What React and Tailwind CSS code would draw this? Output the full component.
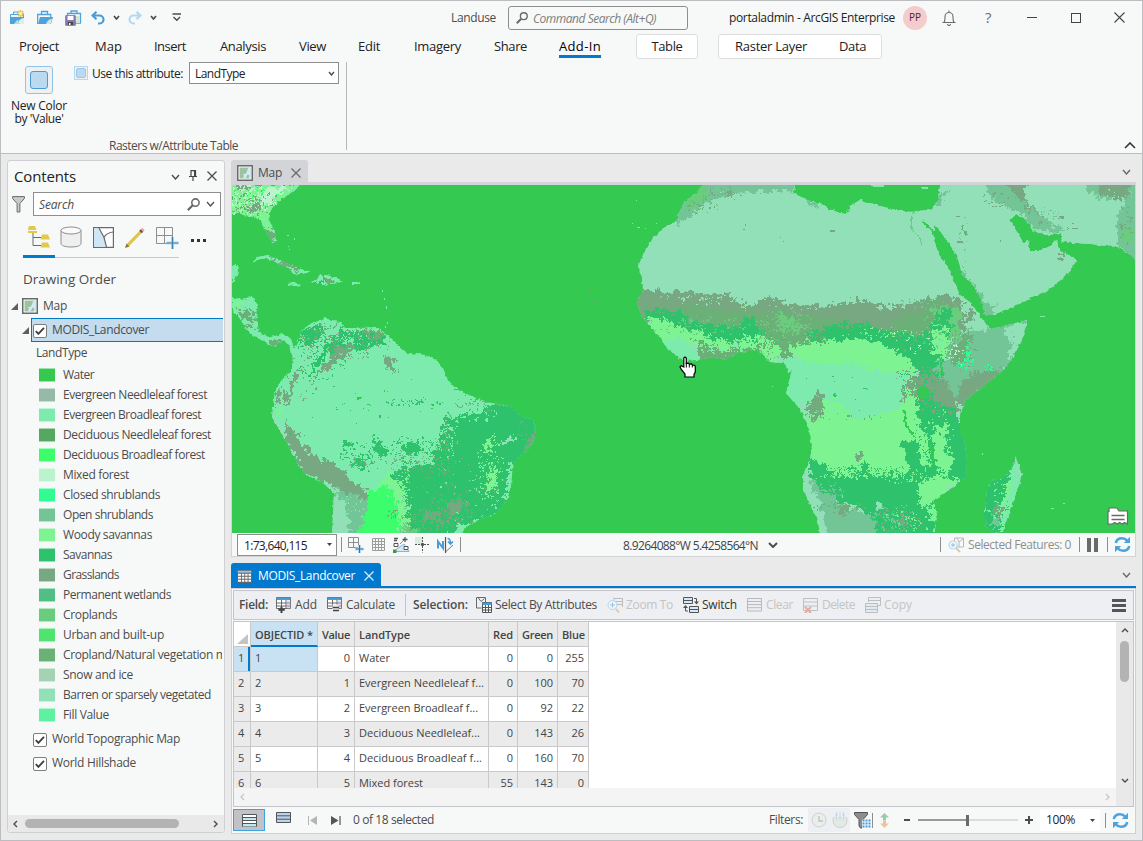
import React, { useLayoutEffect, useRef, useState } from "react";

/* Text run tracked so that it spans exactly w pixels. */
function T({ w, className = "", children }) {
  const ref = useRef(null);
  const [s, setS] = useState(0);
  useLayoutEffect(() => {
    const el = ref.current;
    el.style.letterSpacing = "0px";
    const n = el.getBoundingClientRect().width;
    const v = (w - n) / el.textContent.length;
    el.style.letterSpacing = v + "px";
    setS(v);
  }, [w]);
  return (
    <span className={"block shrink-0 whitespace-nowrap " + className} style={{ width: w }}>
      <span ref={ref} className="inline-block" style={{ letterSpacing: s }}>{children}</span>
    </span>
  );
}

function I({ w = 16, h = 16, className = "", children }) {
  return (
    <svg width={w} height={h} viewBox={`0 0 ${w} ${h}`} fill="none" className={"block shrink-0 " + className}>
      {children}
    </svg>
  );
}

const Chevron = ({ w = 9, c = "#4c4c4c", sw = 1.4, className = "", dir = "down" }) => {
  const h = Math.ceil(w / 2) + 1;
  if (dir === "left") return <I w={h} h={w} className={className}><path d={`M${h - 1} 1L1 ${w / 2}L${h - 1} ${w - 1}`} stroke={c} strokeWidth={sw} /></I>;
  if (dir === "right") return <I w={h} h={w} className={className}><path d={`M1 1L${h - 1} ${w / 2}L1 ${w - 1}`} stroke={c} strokeWidth={sw} /></I>;
  if (dir === "up") return <I w={w} h={h} className={className}><path d={`M1 ${h - 1}L${w / 2} 1L${w - 1} ${h - 1}`} stroke={c} strokeWidth={sw} /></I>;
  return <I w={w} h={h} className={className}><path d={`M1 1L${w / 2} ${h - 1}L${w - 1} 1`} stroke={c} strokeWidth={sw} /></I>;
};

const Cross = ({ w = 11, c = "#4c4c4c", sw = 1.3, className = "" }) => (
  <I w={w} h={w} className={className}><path d={`M.5 .5L${w - 0.5} ${w - 0.5}M${w - 0.5} .5L.5 ${w - 0.5}`} stroke={c} strokeWidth={sw} /></I>
);

const Magnifier = ({ w = 12, c = "#6a6a6a", className = "" }) => (
  <svg width={w} height={w} viewBox="0 0 12 12" fill="none" className={"block shrink-0 " + className}>
    <circle cx="7.8" cy="4.2" r="3.4" stroke={c} strokeWidth="1.4" />
    <path d="M5.3 6.7L.8 11.2" stroke={c} strokeWidth="2" />
  </svg>
);

const VLine = ({ className = "" }) => <div className={"h-[15px] w-px shrink-0 bg-[#8e8e8e] " + className} />;

const Refresh = ({ className = "" }) => (
  <I w={17} h={17} className={className}>
    <path d="M1.8 7C2.4 4 5 2.2 8 2.2c2.4 0 4 .9 5.300 2.500M15.200 10C14.600 13 12 14.800 9 14.800c-2.400 0-4-.9-5.300-2.500" stroke="#4fa3dc" strokeWidth="2.600" />
    <path d="M16 .8v6.200H9.800zM1 16.200V10h6.200z" fill="#4fa3dc" />
  </I>
);

const MapIcon = ({ className = "" }) => (
  <I className={className}>
    <path d="M.75 .75h14.500v14.500H.75z" fill="#fff" stroke="#6a6a6a" strokeWidth="1.500" />
    <path d="M2.500 2.500h11v11h-11z" fill="#9cc3a0" />
    <path d="M11.500 2.500h2v11h-2l1-3-2-1-2 4H6l1-3-1.500-1 3.500-1z" fill="#d3e9f7" />
  </I>
);

const Check = ({ className = "" }) => (
  <div className={"flex h-[14px] w-[14px] shrink-0 items-center justify-center rounded-[2px] border border-[#7d7d7d] bg-white " + className}>
    <I w={10} h={8}><path d="M.8 4.200L3.400 6.800L9 .9" stroke="#3f3f3f" strokeWidth="1.900" /></I>
  </div>
);

const Tri = ({ className = "" }) => <I w={7} h={7} className={className}><path d="M7 0v7H0z" fill="#5f5f5f" /></I>;

const TitleBar = () => (
  <div className="flex h-[33px] items-center pl-2">
    <I>
      <path d="M4.500 4V2h5M1.500 14V4.500h13V14" stroke="#4fa3dc" />
      <path d="M1 7h14v7H1z" fill="#4fa3dc" /><path d="M2 5h12v2H2z" fill="#eef6fb" /><path d="M9 14c0-3 2-5.500 6-6v6z" fill="#dff0e0" /><path d="M5 14l3.500-4.500L11 14z" fill="#b5daf2" />
      <path d="M11.500 0v7M8 3.500h7M9 1l5 5M14 1l-5 5" stroke="#e0c04a" strokeWidth="1.400" /><circle cx="11.500" cy="3.500" r="1.800" fill="#fff1a0" />
    </I>
    <I className="ml-3">
      <path d="M4.500 4V1.500h6V4M.7 14V4.500h13V7" stroke="#4fa3dc" strokeWidth="1.300" />
      <path d="M3 7h13l-2 7H1z" fill="#4fa3dc" /><path d="M9 14c1-3 3-5 6-5l-1.500 5z" fill="#d5ead6" />
    </I>
    <I w={17} h={16} className="ml-3">
      <path d="M6 3V1h6v2M2.500 6V3.500h13V13H10" stroke="#4fa3dc" strokeWidth="1.300" /><path d="M11 6h4v7h-4z" fill="#cfe8d2" />
      <path d="M.7 5.700h9.600v9.600H.7z" fill="#8d75b5" stroke="#8d75b5" /><path d="M2.500 6h6v4h-6z" fill="#fff" /><path d="M3 12h5v3H3z" fill="#444" /><path d="M4 13h1.500v2H4z" fill="#fff" />
    </I>
    <I w={14} h={14} className="ml-[9px]"><path d="M5.500 .8L1.500 4.500L5.500 8.200M1.500 4.500H8.500a4 4 0 0 1 0 8H7" stroke="#4a9bd6" strokeWidth="2.200" /></I>
    <Chevron w={7} sw={1.700} className="ml-[8px]" />
    <I w={14} h={14} className="ml-[8px]"><path d="M8.500 .8L12.500 4.500L8.500 8.200M12.500 4.500H5.500a4 4 0 0 0 0 8H7" stroke="#b4d8ef" strokeWidth="2.200" /></I>
    <Chevron w={7} sw={1.700} className="ml-[8px]" />
    <I w={10} h={9} className="ml-[15px]"><path d="M.5 1h8.500M1.500 4l3.300 3.300L8 4" stroke="#4c4c4c" strokeWidth="1.400" /></I>
    <T w={45} className="ml-[269px] pt-px text-[12px] text-[#4c4c4c]">Landuse</T>
    <div className="ml-3 flex h-6 w-[180px] shrink-0 items-center rounded-[3px] border border-[#8e8e8e] pl-[7px]">
      <Magnifier />
      <T w={123} className="ml-[5px] pt-[2px] text-[12px] italic text-[#7d7d7d]">Command Search (Alt+Q)</T>
    </div>
    <T w={166} className="ml-[41px] pt-px text-[12px] text-[#222]">portaladmin - ArcGIS Enterprise</T>
    <div className="ml-2 flex h-6 w-6 shrink-0 items-center justify-center rounded-full bg-[#f3cccb] text-[10px] text-[#5c2127]">PP</div>
    <I w={14} h={16} className="ml-[15px]"><path d="M.5 12.500h13M2 12.300C3.200 11 3 9 3 6.500a4 4 0 0 1 8 0C11 9 10.800 11 12 12.300M7 2.500V.5M5.500 14a1.500 1.500 0 0 0 3 0" stroke="#6a6a6a" strokeWidth="1.100" /></I>
    <T w={7} className="ml-[29px] text-[15px] text-[#6e6e6e]">?</T>
    <div className="ml-[35px] h-px w-[10px] bg-[#444]" />
    <div className="ml-[34px] h-[10px] w-[10px] border border-[#444]" />
    <Cross w={11} c="#444" sw={1.100} className="ml-[33px]" />
  </div>
);

const Tabs = () => (
  <div className="flex h-[25px] items-center pl-[18px] text-[13px] leading-[25px] text-[#222]">
    <T w={40}>Project</T>
    <T w={27} className="ml-9">Map</T>
    <T w={32} className="ml-8">Insert</T>
    <T w={46} className="ml-[34px]">Analysis</T>
    <T w={27} className="ml-[33px]">View</T>
    <T w={22} className="ml-8">Edit</T>
    <T w={47} className="ml-[34px]">Imagery</T>
    <T w={33} className="ml-[33px]">Share</T>
    <div className="mb-px ml-8 flex h-6 items-center border-b-[3px] border-[#0079cf] pt-[4px]"><T w={42} className="font-medium text-black">Add-In</T></div>
    <div className="ml-[35px] flex h-[25px] w-[62px] items-center justify-center rounded-[3px] border border-[#dedede] bg-white"><T w={31}>Table</T></div>
    <div className="ml-5 flex h-[25px] w-[164px] items-center rounded-[3px] border border-[#dedede] bg-white pl-4">
      <T w={72}>Raster Layer</T><T w={27} className="ml-8">Data</T>
    </div>
  </div>
);

const Ribbon = () => (
  <div className="flex h-[95px] border-b border-[#bcbdc1] pt-[3px] text-[12px] text-[#222]">
    <div className="h-[88px] w-[346px] border-r border-[#b8b8b8]">
      <div className="flex h-[76px] items-start">
        <div className="flex w-[76px] flex-col items-center pt-1">
          <div className="flex h-7 w-7 items-center justify-center rounded-[3px] border border-[#8fc5ea] bg-[#f0f0f0]">
            <div className="h-[18px] w-[18px] rounded-[3px] border border-[#4a9bd6] bg-[#bbdaef]" />
          </div>
          <T w={56} className="mt-[5px] leading-[13px]">New Color</T>
          <T w={49} className="leading-[13px]">by 'Value'</T>
        </div>
        <div className="flex h-[22px] items-center">
          <div className="-ml-[3px] flex h-[14px] w-[14px] items-center justify-center border border-[#b4d8ef] bg-[#f0f0f0]"><div className="h-[10px] w-[10px] rounded-[2px] border border-[#9bc9e8] bg-[#bbdaef]" /></div>
          <T w={91} className="ml-1 pt-[2px]">Use this attribute:</T>
          <div className="ml-[6px] flex h-[22px] w-[150px] items-center justify-between border border-[#8e8e8e] bg-white pl-[5px] pr-[3px]">
            <T w={50} className="pt-[2px]">LandType</T><Chevron w={7} />
          </div>
        </div>
      </div>
      <T w={129} className="ml-[108px] -mt-px leading-[18px] text-[#4c4c4c]">Rasters w/Attribute Table</T>
    </div>
    <Chevron w={12} dir="up" c="#333" sw={1.600} className="ml-auto mr-[6px] mt-[80px]" />
  </div>
);

/* ---------- contents pane ---------- */
const legend = [
  ["Water", 31, "#35c94f"], ["Evergreen Needleleaf forest", 144, "#95bba8"], ["Evergreen Broadleaf forest", 138, "#7cebad"],
  ["Deciduous Needleleaf forest", 148, "#54a862"], ["Deciduous Broadleaf forest", 142, "#3cfe6c"], ["Mixed forest", 66, "#baf3cd"],
  ["Closed shrublands", 97, "#33fb93"], ["Open shrublands", 90, "#73c497"], ["Woody savannas", 89, "#7ef392"], ["Savannas", 49, "#2dc26b"],
  ["Grasslands", 56, "#77a882"], ["Permanent wetlands", 108, "#4fbf85"], ["Croplands", 54, "#6acd7e"], ["Urban and built-up", 101, "#50e46f"],
  ["Cropland/Natural vegetation mosaic", 190, "#6bb077"], ["Snow and ice", 70, "#a3d3b2"], ["Barren or sparsely vegetated", 148, "#92e0b7"], ["Fill Value", 46, "#5ff0a0"],
];

const Contents = () => (
  <div className="ml-[6px] mt-[6px] flex h-[673px] w-[218px] shrink-0 flex-col overflow-hidden rounded-[3px] border border-[#d0d0d4] bg-[#f7f9f8] text-[12px] text-[#4c4c4c]">
    <div className="flex h-[31px] items-center pl-[6px]">
      <T w={62} className="text-[15px] text-[#222]">Contents</T>
      <Chevron w={9} className="ml-[95px]" />
      <I w={8} h={11} className="ml-[9px] mb-[2px]"><path d="M2 6V.6h4.500V6M0 6.500h8M4 7v4" stroke="#444" strokeWidth="1.200" /><path d="M5 1h1.500v5H5z" fill="#444" /></I>
      <Cross w={10} className="ml-[10px] mb-px" />
    </div>
    <div className="flex h-6 items-center pl-1">
      <I w={13} h={17}><path d="M.6 .6h11.800v1.900L7.900 7.500V16H5.100V7.500L.6 2.500z" fill="#c9c9c9" stroke="#6a6a6a" /></I>
      <div className="ml-2 flex h-6 w-[188px] items-center border border-[#8e8e8e] bg-white pl-[5px]">
        <T w={35} className="pt-px italic">Search</T>
        <Magnifier w={13} className="ml-[113px]" />
        <Chevron w={9} sw={1.200} className="ml-[6px]" />
      </div>
    </div>
    <div className="relative ml-[15px] mt-[7px] flex h-[35px] w-[156px] items-center border-b border-[#c8c8c8] pb-[6px]">
      <div className="absolute -bottom-[1px] left-0 h-[3px] w-8 bg-[#0079cf]" />
      <I w={22} h={22} className="ml-[5px]"><path d="M5 6v13.500h8M5 11.500h8" stroke="#6a6a6a" /><path d="M1 0h6l1.500 4h-9zM0 5h9v2H0zM14 8.500h6l2 5h-9.500zM14 16.500h6l2 5h-9.500z" fill="#e2c94a" /></I>
      <I w={22} h={22} className="ml-[10px]"><path d="M1 4.500v13c0 2 4 3.500 10 3.500s10-1.500 10-3.500v-13" fill="#efefef" stroke="#8e8e8e" /><ellipse cx="11" cy="4.500" rx="10" ry="3.500" fill="#fafafa" stroke="#8e8e8e" /></I>
      <I w={21} h={21} className="ml-[11px]"><path d="M.6 .6h19.800v19.800H.6z" fill="#fff" stroke="#6a6a6a" strokeWidth="1.200" /><path d="M1.200 1.200H6l5 10 2 8.600H1.200z" fill="#cfe6f7" /><path d="M6 1l5 9.500 2.500 9.500M11 10.500c2-4 5-5 9-5.500" stroke="#6a6a6a" strokeWidth="1.200" /></I>
      <I w={20} h={21} className="ml-[11px]"><path d="M3 18L16 4.500" stroke="#dcc44a" strokeWidth="3.200" /><path d="M0 21l1.500-4.500L4.600 19.500z" fill="#8a7440" /><path d="M15.500 5l1.500-1.500" stroke="#555" strokeWidth="3.600" /><path d="M17 3.500l1.500-1.500" stroke="#f2a0a0" strokeWidth="3.600" /></I>
      <I w={23} h={23} className="ml-[11px]"><path d="M.5 1.500h16v16H.5zM8.500 1.500v16M.5 9.500h16" stroke="#8e8e8e" /><path d="M16.500 11v12M10.500 17h12" stroke="#b4d8ef" strokeWidth="3" /><path d="M16.500 11v12M10.500 17h12" stroke="#3f7fae" strokeWidth="1.200" /></I>
      <I w={16} h={3} className="ml-[12px] mt-[7px]"><path d="M0 0h3v3H0zM6 0h3v3H6zM12 0h3v3h-3z" fill="#333" /></I>
    </div>
    <T w={93} className="ml-[15px] mt-[11px] text-[13.500px] font-medium leading-[20px]">Drawing Order</T>
    <div className="mt-[5px] flex h-6 items-center pl-[3px]"><Tri /><MapIcon className="ml-[4px]" /><T w={24} className="ml-[5px]">Map</T></div>
    <div className="flex h-6 items-center pl-[14px]">
      <Tri />
      <div className="ml-[2px] flex h-6 w-[192px] items-center border-y border-l border-[#0079c1] bg-[#c5dbee] pl-px">
        <Check className="mt-px" /><T w={97} className="ml-[5px]">MODIS_Landcover</T>
      </div>
    </div>
    <T w={51} className="ml-[28px] leading-[22px]">LandType</T>
    <div className="mt-px w-[214px] overflow-hidden">
      {legend.map(([n, w, c]) => (
        <div key={n} className="flex h-5 items-center pl-[31px]">
          <span className="mb-px h-[14px] w-4 shrink-0 border-y border-white/50" style={{ backgroundColor: c }} />
          <T w={w} className="ml-2">{n}</T>
        </div>
      ))}
    </div>
    <div className="mt-[2px] flex h-6 items-center pl-[25px]"><Check className="mt-px" /><T w={128} className="ml-[5px]">World Topographic Map</T></div>
    <div className="flex h-6 items-center pl-[25px]"><Check className="mt-px" /><T w={84} className="ml-[5px]">World Hillshade</T></div>
    <div className="mt-auto flex h-[17px] items-center bg-[#e9e9e9] pl-[5px]">
      <Chevron w={8} dir="left" /><div className="ml-[7px] h-[9px] w-[154px] rounded-full bg-[#b3b3b3]" /><Chevron w={8} dir="right" className="ml-[34px]" />
    </div>
  </div>
);

/* ---------- map ---------- */
const C = { water: "#34c951", barren: "#92e0b7", broad: "#7cebad", sav: "#2dc26b", woody: "#7ef392", grass: "#77a882", open: "#73c497", crop: "#6acd7e", nat: "#6bb077", dec: "#3cfe6c", closed: "#33fb93", mixed: "#baf3cd" };

const americas = [
  "232,185 300,185 292,192 283,198 274,205 270,212 268,218 272,226 276,235 276,241 273,243 269,238 264,228 261,221 255,216 249,217 244,214 232,214",
  "252,263 258,257 268,255 276,259 286,263 298,268 311,272 301,274 293,273 289,268 278,263 268,259 260,259",
  "311,283 318,280 317,275 326,275 334,277 343,281 338,283 328,284 326,287 321,283",
  "288,283 294,282 300,285 295,286 290,285", "352,282 360,282 360,284 352,284", "232,265 239,265 237,275 234,281 232,283",
  "232,298 242,299 252,297 258,304 256,315 258,325 259,332 268,338 275,336 283,334 290,339 296,350 293,356 289,346 284,340 278,343 275,347 268,344 258,338 250,333 244,325 238,316 232,310",
  "293,352 300,336 302,330 312,323 326,318 330,321 340,322 345,328 358,328 377,327 390,337 400,347 407,353 425,355 436,360 443,368 448,381 460,391 478,399 490,403 510,406 523,417 533,419 536,430 533,443 525,452 513,463 511,485 507,500 497,513 480,520 465,527 461,536 332,536 334,493 323,483 305,474 297,463 288,444 278,428 272,418 273,408 275,392 281,381 292,370",
];
const oldWorld = [
  "702,184 697,193 684,202 679,213 677,221 662,229 652,240 643,255 638,267 642,277 643,290 637,303 641,314 648,324 658,335 667,348 683,361 696,360 715,357 725,360 740,352 757,350 763,354 770,362 785,363 788,372 792,370 786,393 800,409 808,425 812,445 810,460 803,475 803,490 810,505 818,520 820,536 934,536 937,515 933,500 953,487 966,477 967,460 965,445 960,432 960,415 965,401 980,389 1000,373 1012,359 1022,340 1027,326 1027,320 1008,325 990,329 982,319 971,303 960,295 953,280 948,268 938,253 932,232 924,225 921,218 934,231 934,220 932,210 915,211 900,211 880,206 860,200 850,206 847,214 840,213 829,209 820,203 807,200 793,193 797,180 702,180",
  "941,180 1140,180 1140,265 1128,253 1117,247 1090,244 1062,242 1061,233 1047,235 1033,231 1024,218 1016,214 1010,220 1017,232 1023,242 1028,240 1030,250 1042,250 1052,245 1057,239 1059,250 1068,255 1077,260 1070,270 1062,280 1048,290 1030,299 1010,308 993,315 985,315 980,297 973,285 962,275 957,255 945,238 938,228 932,222 930,212 938,200",
  "1016,457 1013,466 1005,477 990,481 987,492 984,512 986,526 993,533 1003,531 1010,510 1018,488 1022,476",
];

const regA = [
  ["woody", "232,185 300,185 280,200 268,220 276,241 262,225 232,216"],
  ["grass", "234,185 250,185 246,192 236,190"], ["grass", "246,206 260,202 258,210 248,212"], ["nat", "264,228 276,232 276,243 268,240"], ["mixed", "262,190 280,186 290,190 272,198 262,208"],
  ["grass", "266,255 282,260 298,268 296,272 276,262"], ["nat", "317,275 332,277 336,282 322,282"],
  ["nat", "242,312 254,312 257,322 248,325 240,318"], ["woody", "232,300 242,300 240,310 233,308"], ["nat", "268,340 279,340 276,347"],
  ["sav", "306,326 320,324 322,334 312,344 300,345"], ["sav", "342,330 380,332 388,344 372,348 350,352 330,352 318,364 312,374 306,376 326,346"],
  ["grass", "334,346 356,344 350,356 336,364 318,374 330,358"], ["nat", "362,330 384,332 380,338 364,336"], ["grass", "296,370 299,374 291,394 287,406 284,404 288,388"],
  ["grass", "384,355 392,360 396,374 390,372 384,364"],
  ["grass", "276,394 281,386 280,402 275,406"], ["woody", "276,408 282,408 282,416 276,414"],
  ["barren", "268,412 280,425 290,444 300,462 312,472 328,480 344,494 344,512 356,540 326,540 326,480 286,465 266,420"],
  ["open", "332,486 348,486 367,496 368,514 358,540 350,540 346,505"],
  ["grass", "283,417 291,427 303,444 318,460 336,463 350,480 367,490 367,500 346,492 328,482 308,476 297,462 286,440"],
  ["sav", "450,388 462,392 486,405 510,402 525,412 540,416 540,440 522,460 515,464 514,485 510,500 498,513 460,528 440,540 403,540 408,505 404,490 388,478 392,470 412,466 434,464 432,452 442,440 443,422 452,408"],
  ["sav", "372,438 380,440 388,454 378,458 372,448"], ["sav", "400,446 418,442 424,450 408,456"], ["sav", "352,462 364,460 368,466 358,470"], ["sav", "342,444 352,442 350,448 344,448"],
  ["broad", "446,388 470,396 488,404 486,410 466,414 450,420"],
  ["dec", "367,494 378,489 384,486 394,488 399,508 402,540 358,540 365,516"],
  ["woody", "379,484 388,473 398,482 407,500 407,540 400,540 398,508 393,488 381,486"],
  ["grass", "450,502 464,502 462,512 450,514"], ["grass", "420,514 434,510 440,516 426,520"], ["crop", "400,529 414,527 432,540 398,540"],
  ["woody", "484,440 490,438 490,450 486,452"], ["woody", "490,472 498,470 494,488 487,494 488,482"], ["grass", "530,436 538,428 534,446 524,456"], ["barren", "504,440 514,437 514,441 505,444"],
  ["broad", "509,464 515,463 514,486 510,500 506,500"], ["broad", "462,524 502,513 482,524 462,536 448,536"],
];
const regB = [
  ["open", "702,180 798,180 792,192 760,190 724,194 706,204 694,213 676,224 672,202 694,180"], ["crop", "700,180 712,180 706,198 692,210 684,204"], ["grass", "724,194 736,192 730,199"],
  ["open", "808,200 818,202 816,208 808,205"],
  ["grass", "630,290 650,289 664,292 690,291 710,295 728,294 744,306 756,304 764,295 790,304 824,306 860,300 890,308 920,300 940,296 960,298 966,330 940,345 900,338 760,336 690,330 630,320"],
  ["nat", "700,308 740,312 780,312 830,318 860,322 850,340 790,358 700,334 650,312 660,308"],
  ["nat", "890,322 920,313 934,298 950,304 944,330 900,334"], ["crop", "776,314 796,318 806,326 796,334 780,332"], ["crop", "930,308 944,304 960,312 960,336 946,344 934,324"],
  ["sav", "644,312 656,309 682,310 690,322 706,322 722,326 740,328 746,316 758,322 764,334 744,342 720,346 690,334 660,324"],
  ["sav", "800,336 820,330 836,323 866,322 880,330 900,332 920,336 930,330 934,312 952,306 952,330 942,352 946,374 930,382 920,372 890,356 872,344 840,342 806,346"],
  ["woody", "646,315 664,320 680,329 696,330 712,338 728,342 736,346 722,352 700,344 680,342 664,342 650,328"],
  ["broad", "662,340 690,338 694,350 700,364 683,366 664,350"], ["nat", "694,338 722,350 758,346 760,354 726,366 700,364"], ["woody", "738,338 758,334 776,344 782,352 772,362 758,348 738,348"],
  ["woody", "788,346 806,342 850,338 878,340 900,354 914,364 916,376 880,372 850,366 812,366 792,356"],
  ["broad", "780,356 812,364 830,366 850,362 880,371 910,374 908,390 902,410 862,420 840,408 806,404 780,396"],
  ["woody", "932,330 944,328 950,344 946,356 934,352"], ["broad", "936,342 942,340 942,348 936,348"],
  ["open", "948,346 972,326 1034,316 1018,356 984,390 962,404 954,394 940,376"], ["barren", "962,300 980,318 990,330 972,330 966,326"], ["barren", "1004,328 1032,318 1024,346 1008,362 1010,342"],
  ["grass", "970,308 976,304 972,324 964,320"], ["nat", "950,352 966,332 970,338 964,362 952,364"], ["open", "936,362 950,364 950,382 936,380"], ["grass", "956,400 962,380 982,370 1004,368 984,389 964,406"],
  ["grass", "906,382 922,372 944,380 956,396 958,412 928,414 918,398 906,408 900,400"],
  ["sav", "916,392 930,392 936,402 956,412 968,440 972,462 968,480 946,490 932,502 918,494 918,470 902,462 902,440"],
  ["woody", "812,412 826,398 846,406 866,410 900,408 908,392 916,396 918,424 928,440 930,462 918,474 880,476 820,474 808,448 806,420"],
  ["broad", "844,404 900,406 880,416 870,414 858,422 850,414"], ["grass", "816,392 822,392 824,412 812,420 808,408"],
  ["woody", "934,430 948,424 946,444 954,466 944,476 932,460"],
  ["sav", "808,458 822,464 832,474 860,474 864,462 872,476 900,474 920,470 936,476 936,540 880,540 866,510 840,500 808,488"],
  ["sav", "902,442 916,440 924,470 912,472"], ["woody", "924,480 942,476 960,480 938,498 922,508 920,490"],
  ["woody", "928,506 938,508 936,522 930,520"],
  ["open", "804,468 812,480 824,492 840,502 858,512 876,520 876,540 820,540 808,500"], ["barren", "796,470 808,462 810,482 822,508 828,540 812,540 798,496"], ["grass", "836,504 848,508 850,514 838,512"],
  ["grass", "854,454 862,452 866,458 858,460"], ["grass", "900,514 906,516 904,530 900,528"], ["barren", "876,504 884,504 884,508 876,508"],
  ["open", "960,266 968,276 980,290 985,302 996,306 992,318 982,318 974,286 962,276"], ["nat", "962,226 965,226 966,238 963,236"],
  ["open", "984,180 1010,180 1026,200 1036,214 1054,224 1066,232 1052,234 1032,228 1022,212 1006,208 990,198"],
  ["grass", "1004,180 1026,180 1024,200 1036,210 1046,218 1034,214 1020,200"], ["open", "1078,180 1140,180 1140,262 1118,248 1116,224 1124,198 1100,200"],
  ["grass", "1100,180 1132,180 1130,194 1116,200 1098,194"], ["crop", "1122,228 1132,226 1134,242 1124,240"], ["open", "938,196 948,190 942,202 930,210"],
  ["crop", "904,208 920,209 914,214 908,212"], ["grass", "1056,248 1060,254 1070,257 1062,257"],
  ["open", "986,330 1008,330 1000,346 980,360"],
  ["sav", "1014,460 1006,477 990,478 982,500 982,534 1000,536 1010,500"], ["broad", "1010,466 1024,472 1018,494 1008,528 1001,532 1008,500"], ["woody", "1007,484 1011,486 1006,506 1002,518 1001,510"], ["grass", "994,506 1000,502 1002,514 994,512"], ["open", "992,518 1001,516 999,528 992,526"],
];

/* x, y, rx, ry, colour, count */
const speck = [
  [250, 200, 24, 14, "mixed", 230], [250, 200, 24, 14, "grass", 110], [260, 192, 20, 6, "dec", 16], [271, 231, 6, 12, "grass", 40],
  [285, 265, 22, 8, "broad", 50], [326, 280, 14, 5, "sav", 15], [248, 316, 12, 16, "nat", 40], [345, 340, 42, 18, "grass", 130], [345, 340, 42, 18, "broad", 200], [320, 350, 26, 26, "sav", 110], [330, 335, 30, 14, "nat", 80],
  [300, 375, 16, 22, "grass", 50], [390, 400, 60, 20, "water", 14], [415, 402, 26, 3, "sav", 45], [350, 410, 60, 50, "sav", 20], [365, 455, 22, 14, "sav", 100], [412, 450, 26, 12, "sav", 130], [410, 462, 26, 10, "nat", 80],
  [360, 463, 12, 5, "grass", 40], [445, 450, 10, 28, "nat", 110], [475, 404, 20, 6, "nat", 50], [468, 410, 24, 12, "broad", 90], [445, 430, 12, 26, "broad", 90], [490, 470, 12, 34, "woody", 160], [470, 490, 40, 34, "broad", 36],
  [450, 508, 20, 14, "grass", 150], [430, 518, 26, 10, "nat", 170], [460, 490, 44, 30, "nat", 90], [403, 500, 7, 34, "woody", 110], [403, 500, 9, 34, "open", 40], [392, 514, 5, 6, "grass", 14], [352, 505, 12, 14, "broad", 24], [526, 440, 10, 20, "nat", 26], [396, 484, 12, 12, "broad", 30],
  [725, 193, 40, 6, "grass", 50], [700, 205, 18, 9, "nat", 36], [700, 297, 56, 7, "barren", 70], [800, 305, 40, 4, "barren", 20], [700, 306, 60, 8, "nat", 110],
  [700, 326, 50, 9, "crop", 90], [790, 328, 30, 14, "nat", 200], [785, 325, 26, 15, "crop", 120], [745, 338, 36, 8, "sav", 90], [720, 344, 34, 7, "woody", 90], [725, 350, 28, 6, "broad", 50], [770, 346, 14, 12, "nat", 90], [805, 339, 20, 6, "nat", 80],
  [860, 326, 46, 4, "nat", 60], [890, 333, 30, 5, "woody", 50], [905, 342, 26, 12, "mixed", 14], [915, 330, 26, 18, "nat", 90], [940, 330, 16, 26, "crop", 90], [940, 340, 12, 18, "woody", 60], [960, 350, 14, 18, "grass", 150], [957, 354, 8, 10, "mixed", 26], [969, 352, 4, 12, "closed", 44], [965, 364, 7, 5, "closed", 40], [988, 367, 5, 2, "closed", 14],
  [920, 376, 22, 10, "grass", 90], [922, 378, 20, 16, "sav", 110], [940, 402, 20, 12, "grass", 150], [910, 398, 8, 16, "woody", 60], [850, 388, 50, 20, "sav", 16], [813, 408, 9, 8, "nat", 50], [850, 412, 34, 4, "broad", 60], [850, 415, 36, 6, "nat", 16],
  [925, 430, 12, 24, "sav", 90], [938, 440, 14, 30, "woody", 90], [860, 470, 50, 5, "sav", 150], [850, 476, 44, 3, "woody", 50], [900, 475, 24, 7, "woody", 70], [928, 495, 12, 18, "woody", 50], [826, 490, 16, 8, "open", 50], [840, 506, 24, 5, "nat", 60], [890, 518, 22, 12, "open", 90], [900, 520, 22, 12, "grass", 50], [910, 518, 22, 12, "woody", 50],
  [1036, 216, 20, 10, "open", 40], [995, 198, 12, 8, "grass", 24], [1126, 222, 8, 22, "grass", 30], [1110, 196, 22, 6, "barren", 20], [1055, 225, 20, 8, "grass", 10], [964, 246, 10, 30, "open", 10], [930, 303, 26, 5, "open", 30], [1003, 498, 10, 24, "woody", 40], [998, 512, 10, 16, "broad", 30], [1012, 344, 8, 12, "open", 24], [900, 304, 50, 4, "grass", 40],
];

function buildSpecks() {
  let seed = 7;
  const rnd = () => ((seed = (seed * 16807) % 2147483647) / 2147483647);
  return speck.map(([x, y, rx, ry, c, n]) => {
    let d = "";
    for (let i = 0; i < n; i++) {
      const a = rnd() * 6.283, r = Math.pow(rnd(), 0.7) * 1.15;
      const px = Math.round(x + Math.cos(a) * r * rx), py = Math.round(y + Math.sin(a) * r * ry);
      const w = rnd() > 0.6 ? 2 : 1, h = rnd() > 0.8 ? 2 : 1;
      d += `M${px} ${py}h${w}v${h}h-${w}z`;
    }
    return [c, d];
  });
}
const speckPaths = buildSpecks();

const LandMap = () => (
  <svg viewBox="232 185 903 348" width="903" height="348" className="block" shapeRendering="crispEdges">
    <defs>
      <clipPath id="land">{[...americas, ...oldWorld].map((p, i) => <polygon key={i} points={p} />)}</clipPath>
      <filter id="rough" x="0" y="0" width="1" height="1" colorInterpolationFilters="sRGB"><feTurbulence type="fractalNoise" baseFrequency="0.16" numOctaves="4" seed="4" /><feDisplacementMap in="SourceGraphic" scale="14" xChannelSelector="R" yChannelSelector="G" /></filter>
      <filter id="edge" x="0" y="0" width="1" height="1" colorInterpolationFilters="sRGB"><feTurbulence type="fractalNoise" baseFrequency="0.25" numOctaves="2" seed="9" /><feDisplacementMap in="SourceGraphic" scale="4" xChannelSelector="R" yChannelSelector="G" /></filter>
    </defs>
    <rect x="232" y="185" width="903" height="348" fill={C.water} />
    <g filter="url(#edge)">
      <rect x="222" y="175" width="923" height="368" fill={C.water} />
      <g clipPath="url(#land)">
        <rect x="232" y="175" width="400" height="364" fill={C.broad} />
        <rect x="632" y="175" width="508" height="364" fill={C.barren} />
        <g filter="url(#rough)">
          <rect x="222" y="175" width="410" height="368" fill={C.broad} />
          <rect x="632" y="175" width="514" height="368" fill={C.barren} />
          {[...regA, ...regB].map(([c, p], i) => <polygon key={i} points={p} fill={C[c]} />)}
        </g>
        {speckPaths.map(([c, d], i) => <path key={i} d={d} fill={C[c]} />)}
        <path d="M917 389l5-3 7 1 1 6-5 6-7-2z" fill={C.water} />
        <path d="M904 410l2 16 10 12M930 442l3 12v14M941 363l1 10" stroke={C.water} strokeWidth="2" fill="none" />
        <path d="M911 216l1 14 8 8 2 8" stroke={C.crop} strokeWidth="1" fill="none" />
      </g>
    </g>
    <path d="M287 235h2v1h-2zM294 238h1v2h-1zM288 244l2 6h-1zM382 290h1v2h-1zM384 298h1v2h-1zM386 306h1v3h-1zM385 326h1v2h-1zM387 322h1v2h-1zM636 200h1v1h-1zM632 223h1v1h-1zM637 227h3v1h-3zM645 228h1v1h-1zM655 224l2-2v2zM1040 316h5v1h-5zM982 453h1v2h-1zM1051 508h3v1h-3zM1063 503h2v1h-2zM772 386h1v1h-1zM870 185h14v2h-10zM920 187h8v2h-6z" fill={C.broad} />
    <path d="M589 292h2v1h-2zM599 291h1v1h-1zM594 302h1v1h-1zM271 277h2v1h-2zM374 283h1v1h-1zM743 229h2v1h-2zM745 224h1v2h-1zM830 230h5v2h-5zM780 237h1v1h-1zM783 241h1v1h-1zM956 216h4v1h-4zM1058 216h6v3h-3zM1072 228h6v1h-6zM957 241h6v2h-6zM1000 240h1v2h-1z" fill={C.grass} />
    <g transform="translate(1107 507)" shapeRendering="auto">
      <path d="M1 17V4.500h1V1h8l2 3h8.500v13l-3-1.500-2 1.500-3-1.500-2 1.500-3-1.500-2 1.500z" fill="#fff" stroke="#6a6a6a" strokeWidth="1.200" />
      <path d="M4.500 8.500h13M4.500 12.500h13" stroke="#6a6a6a" strokeWidth="1.300" />
    </g>
    <g transform="translate(679.500 356.500)" shapeRendering="auto">
      <path d="M5.500 20.500v-3L1.800 13 .5 10.300l1.200-1L4.300 10.500V1.500l1.200-.9 1.300.9V7l2-.4 1.200 1 2-.2 1 1.100 2.200.4.600 1.600v5L14.500 18v2.500z" fill="#fff" stroke="#000" strokeWidth="1.200" />
      <path d="M6.800 6v5M9.800 7.500V11M12.800 8.500V11" stroke="#000" />
    </g>
  </svg>
);

const GridPlus = ({ className }) => <I w={16} h={16} className={className}><path d="M.5 .5h10v10H.5zM5.500 .5v10M.5 5.500h10" stroke="#8e8e8e" /><path d="M11.500 8v8M7.500 12h8" stroke="#b4d8ef" strokeWidth="3" /><path d="M11.500 8v8M7.500 12h8" stroke="#3f6f92" /></I>;

const MapView = () => (
  <div className="flex h-[397px] w-[905px] flex-col">
    <div className="flex h-[25px] items-end border-b-[3px] border-[#d3d4d8]">
      <div className="flex h-[22px] w-[77px] items-center rounded-t-[3px] bg-[#d3d4d8] pl-[6px] pt-[3px] text-[12px] text-[#4c4c4c]">
        <MapIcon /><T w={24} className="ml-[5px]">Map</T><Cross w={10} className="ml-[9px]" c="#6a6a6a" />
      </div>
      <Chevron w={9} c="#6a6a6a" className="mb-[7px] ml-auto mr-[5px]" />
    </div>
    <div className="border-x border-b border-[#d3d4d8] bg-[#f7f9f8]">
      <LandMap />
      <div className="flex h-[23px] items-center pl-[5px] text-[12px]">
        <div className="flex h-[22px] w-[100px] items-center border border-[#8e8e8e] bg-white pl-[6px] text-[#222]"><T w={63} className="pt-[2px]">1:73,640,115</T><I w={5} h={3} className="ml-[20px]"><path d="M0 0h5L2.500 3z" fill="#444" /></I></div>
        <VLine className="ml-1" />
        <GridPlus className="ml-[6px]" />
        <I w={13} h={13} className="ml-[8px]"><path d="M.5 .5h12v12H.5zM3.500 0v13M6.500 0v13M9.500 0v13M0 3.500h13M0 6.500h13M0 9.500h13" stroke="#9c9c9c" /></I>
        <I w={17} h={16} className="ml-[8px]"><path d="M1 1.500h4M1 3.500h3M12 0v5M9.500 2.500h5" stroke="#555" strokeWidth="1.300" /><path d="M7 7l4-4" stroke="#4a9bd6" /><path d="M3 12.500L11 7l5 7.500H3" fill="#d3e9f7" stroke="#7db8e0" /><path d="M1 6.500h4v3H1zM11 9.500h4v3h-4z" fill="#fff" stroke="#555" /><path d="M0 12.500h3.500V16H0z" fill="#4d9152" /></I>
        <I w={15} h={16} className="ml-[5px]"><path d="M0 0h7v7H0z" fill="#dcecdc" /><path d="M7.500 0v15.500M0 7.500h15" stroke="#555" strokeDasharray="2 1" /><circle cx="7.500" cy="7.500" r="1.700" fill="#555" /></I>
        <I w={17} h={16} className="ml-[7px]"><path d="M1 11.500V4.500l5 6.500V4" stroke="#4a9bd6" strokeWidth="2" /><path d="M8.500 0v16" stroke="#555" strokeWidth="1.200" /><path d="M9 14.500L16 8" stroke="#777" /><path d="M10.500 1.500c2.500 0 3 2 3 5M11 4.500l2.500 2.500 2.500-2.500" stroke="#4a9bd6" strokeWidth="1.600" /></I>
        <VLine className="ml-[6px]" />
        <T w={135} className="ml-[162px] pt-[2px] text-[#444]">8.9264088°W 5.4258564°N</T>
        <Chevron w={10} sw={2} className="ml-[10px]" />
        <VLine className="ml-[162px]" />
        <I w={16} h={16} className="ml-[7px] opacity-60"><path d="M6.500 1h9v9H8M6.500 1v4M9 1l2 4 4-3M11 5v5" stroke="#8e8e8e" /><circle cx="5" cy="8" r="4" fill="#eaf5fc" stroke="#8fc5ea" strokeWidth="1.200" /><path d="M5 6v4M3 8h4" stroke="#4a9bd6" /><path d="M8 11l4 4" stroke="#d2a679" strokeWidth="2" /></I>
        <T w={103} className="ml-1 pt-px text-[#8f8f8f]">Selected Features: 0</T>
        <VLine className="ml-2" />
        <div className="ml-[7px] h-[14px] w-[11px] border-x-4 border-[#6a6a6a]" />
        <VLine className="ml-[9px]" />
        <Refresh className="ml-[6px]" />
      </div>
    </div>
  </div>
);

/* ---------- attribute table ---------- */
const Lines = ({ className = "" }) => <I w={16} h={14} className={className}><path d="M.5 .5h14v12.500H.5zM.5 3.500h14M.5 6.600h14M.5 9.700h14" stroke="#6a6a6a" /></I>;
const TableGlyph = ({ className = "", mark }) => (
  <I w={16} h={16} className={className}><path d="M.5 .5h14v11H.5z" fill="#fff" stroke="#6a6a6a" /><path d="M.5 .5h14v2.500H.5z" fill="#4a9bd6" /><path d="M5.500 3v9M10 3v9M.5 6h14M.5 9h14" stroke="#6a6a6a" /><path d="M10.500 3.500h4v8h-4z" fill="#bdb2d6" fillOpacity=".5" />{mark}</I>
);

const TableTools = () => (
  <div className="flex h-[30px] items-center border border-[#c4c5ca] bg-[#eeeff2] pl-[5px] text-[12px] text-[#4c4c4c]">
    <T w={29} className="font-semibold">Field:</T>
    <TableGlyph className="ml-2" mark={<path d="M5.500 9.500v6.500M2.300 12.700h6.500" stroke="#444" strokeWidth="2" />} />
    <T w={22} className="ml-[3px]">Add</T>
    <TableGlyph className="ml-[10px]" mark={<><path d="M5.500 7.500h6V16h-6z" fill="#eeeff2" /><path d="M6 10.500h6M6 13.500h6" stroke="#444" strokeWidth="1.300" /></>} />
    <T w={49} className="ml-[3px]">Calculate</T>
    <div className="ml-[10px] h-[22px] w-px bg-[#c4c5ca]" />
    <T w={55} className="ml-[7px] font-semibold">Selection:</T>
    <I className="ml-2"><path d="M5.500 11H.5V.5h9V5M2 .5l3 4 3.500-3" stroke="#6a6a6a" /><path d="M6.500 5.500h9v10h-9z" fill="#fff" stroke="#555" /><path d="M6.500 5.500h9v2.500h-9z" fill="#4a9bd6" /><path d="M9.500 8v7.500M12.500 8v7.500M6.500 10.500h9M6.500 13h9" stroke="#555" /></I>
    <T w={102} className="ml-[3px]">Select By Attributes</T>
    <I className="ml-[10px] opacity-50"><path d="M7 1.500h8.500M7 4.500h8.500M9 7.500h6.500M7 .5v3M15.500 1v9" stroke="#8e8e8e" /><circle cx="5.500" cy="8" r="4.500" fill="#f4fafe" stroke="#7db8e0" /><path d="M5.500 5.500v5M3 8h5" stroke="#4a9bd6" /><path d="M9 12l3 3.500" stroke="#d2a679" strokeWidth="2" /></I>
    <T w={47} className="ml-[3px] text-[#c4c4c4]">Zoom To</T>
    <I className="ml-[10px]"><path d="M.5 .5h9v6h-9zM6.500 9.500h9v6h-9z" fill="#d3e9f7" stroke="#555" /><path d="M.5 3.500h9M6.500 12.500h9M13.500 7V3.500M11 1.500h2.500V6M2.500 9v5H5" stroke="#555" /><path d="M11 4.500h5L13.500 7.500zM0 11h5L2.500 8z" fill="#555" /></I>
    <T w={35} className="ml-[3px] text-[#333]">Switch</T>
    <Lines className="ml-[10px] opacity-40" />
    <T w={27} className="ml-[3px] text-[#c4c4c4]">Clear</T>
    <I className="ml-[10px] opacity-50"><path d="M.5 1.500h14v12H.5zM.5 5h14M.5 9h14" stroke="#8e8e8e" /><path d="M2 10l6 6M8 10l-6 6" stroke="#e06a50" strokeWidth="2" /></I>
    <T w={33} className="ml-[3px] text-[#c4c4c4]">Delete</T>
    <I className="ml-[10px] opacity-50"><path d="M3.500 .5h12v8H12M3.500 .5V5M3.500 3.500h12" stroke="#8e8e8e" /><path d="M.5 6.500h12v9H.5z" fill="#d3e9f7" stroke="#8e8e8e" /><path d="M.5 9.500h12M.5 12.500h12" stroke="#8e8e8e" /></I>
    <T w={28} className="ml-[3px] text-[#c4c4c4]">Copy</T>
    <I w={14} h={13} className="ml-auto mr-[7px]"><path d="M0 1.500h14M0 6.500h14M0 11.500h14" stroke="#555" strokeWidth="2.800" /></I>
  </div>
);

const rows = [
  [1, 0, "Water", 31, 0, 0, 255], [2, 1, "Evergreen Needleleaf f...", 125, 0, 100, 70], [3, 2, "Evergreen Broadleaf f...", 119, 0, 92, 22],
  [4, 3, "Deciduous Needleleaf...", 121, 0, 143, 26], [5, 4, "Deciduous Broadleaf f...", 123, 0, 160, 70], [6, 5, "Mixed forest", 64, 55, 143, 0],
];
const cell = "flex h-[25px] shrink-0 items-center border-b border-r border-[#c9c9c9] ";

const Grid = () => (
  <div className="mt-px flex h-[186px] border border-[#c4c5ca] bg-white text-[11px] text-[#444]">
    <div className="flex w-[882px] flex-col">
      <div className="h-[166px] overflow-hidden">
        <div className="flex w-[355px] bg-[#eaeaea] font-semibold">
          <div className={cell + "w-[17px] bg-white pl-[3px]"}><I w={11} h={10} className="mt-[10px]"><path d="M11 0v10H0z" fill="#c4c4c4" /></I></div>
          <div className={cell + "w-[67px] border-b-2 border-b-[#0079cf] bg-[#c8e2f4] pl-1 pt-[3px]"}><T w={58}>OBJECTID *</T></div>
          <div className={cell + "w-[37px] pl-1 pt-[2px]"}><T w={28}>Value</T></div>
          <div className={cell + "w-[134px] pl-1 pt-[2px]"}><T w={51}>LandType</T></div>
          <div className={cell + "w-[29px] pl-1 pt-[2px]"}><T w={20}>Red</T></div>
          <div className={cell + "w-[40px] pl-1 pt-[2px]"}><T w={31}>Green</T></div>
          <div className={cell + "w-[31px] pl-1 pt-[2px]"}><T w={23}>Blue</T></div>
        </div>
        {rows.map(([id, v, t, w, r, g, b], i) => (
          <div key={id} className={"flex w-[355px] " + (i % 2 ? "bg-[#ebebeb]" : "bg-white")}>
            <div className={cell + "w-[17px] pb-[2px] pl-1 " + (i ? "bg-[#ebebeb]" : "bg-[#c8e2f4] shadow-[inset_-2px_0_0_#0079cf]")}>{id}</div>
            <div className={cell + "w-[67px] pb-[2px] pl-1 " + (i ? "" : "bg-[#c8e2f4]")}>{id}</div>
            <div className={cell + "w-[37px] justify-end pb-[2px] pr-1"}>{v}</div>
            <div className={cell + "w-[134px] pb-[2px] pl-1"}><T w={w}>{t}</T></div>
            <div className={cell + "w-[29px] justify-end pb-[2px] pr-1"}>{r}</div>
            <div className={cell + "w-[40px] justify-end pb-[2px] pr-1"}>{g}</div>
            <div className={cell + "w-[31px] justify-end pb-[2px] pr-1"}>{b}</div>
          </div>
        ))}
      </div>
      <div className="flex h-[18px] items-center justify-between bg-[#f4f4f4] px-[6px]"><Chevron w={8} dir="left" c="#c8c8c8" /><Chevron w={8} dir="right" c="#c8c8c8" /></div>
    </div>
    <div className="flex flex-1 flex-col items-center bg-[#e9e9e9] py-[6px]">
      <Chevron w={8} dir="up" /><div className="mt-[8px] h-[41px] w-[9px] rounded-full bg-[#b3b3b3]" /><Chevron w={8} className="mt-auto mb-[17px]" />
    </div>
  </div>
);

const TableFooter = () => (
  <div className="flex h-[25px] items-center pt-px text-[12px] text-[#4c4c4c]">
    <div className="flex h-[22px] w-8 items-center justify-center border border-[#3ea2e0] bg-[#c0c2c7]"><I w={15} h={13}><path d="M.5 .5h14v12H.5z" fill="#fff" stroke="#555" /><path d="M1 4h13v2H1zM1 9.500h13v3H1z" fill="#bfe8f5" /><path d="M.5 3.500h14M.5 6.500h14M.5 9.500h14" stroke="#555" /></I></div>
    <I w={15} h={11} className="mb-[6px] ml-[11px]"><path d="M.5 .5h14v10H.5z" fill="#b9d3ee" stroke="#555" /><path d="M.5 3.800h14M.5 7.200h14" stroke="#555" /></I>
    <I w={10} h={9} className="ml-[17px]"><path d="M.5 0v9" stroke="#b5b5b5" /><path d="M9 0v9L2 4.500z" fill="#b5b5b5" /></I>
    <I w={10} h={9} className="ml-[13px]"><path d="M9 0v9" stroke="#555" strokeWidth="1.200" /><path d="M0 0v9l7.500-4.500z" fill="#555" /></I>
    <T w={81} className="ml-[12px]">0 of 18 selected</T>
    <T w={34} className="ml-[335px]">Filters:</T>
    <div className="ml-[5px] flex h-6 w-[42px] items-center bg-[#eeeff2] pl-[3px]">
      <I><circle cx="8" cy="8" r="7" fill="#eaeeeb" stroke="#cdd0d0" /><path d="M8 4v5h4" stroke="#b9c2c4" strokeWidth="1.300" /></I>
      <I className="ml-[5px]"><path d="M14 5a7 7 0 1 1-12 0" fill="#e2eae4" stroke="#cdd0d0" /><path d="M4.500 0v8M8 0v8M11.500 0v8M3 3h3M6.500 5.500h3M10 3h3" stroke="#c2dbea" /></I>
    </div>
    <I w={18} h={17} className="ml-[4px]"><path d="M.5 .5h13v2L9 7.500V10L8 16H6.500L5 14V7.500L.5 2.500z" fill="#8e8e8e" stroke="#555" /><path d="M8 7.500h9.500V17H8z" fill="#f7f9f8" /><path d="M8.500 8.500h8M8.500 11.500h8M8.500 14.500h8" stroke="#4a9bd6" strokeWidth="2" strokeDasharray="2 1" /></I>
    <VLine />
    <I w={9} h={15} className="ml-[7px] opacity-60"><path d="M4.500 0L9 4.500H6v3H3v-3H0z" fill="#5fae74" /><path d="M4.500 15L9 10.500H6v-3H3v3H0z" fill="#eba05b" /></I>
    <div className="ml-[15px] h-[2px] w-[6px] bg-[#4c4c4c]" />
    <div className="ml-[8px] flex w-[100px] items-center"><div className="h-[2px] w-[48px] bg-[#9a9a9a]" /><div className="h-[11px] w-[3px] bg-[#6a6a6a]" /><div className="h-[2px] flex-1 bg-[#dcdcdc]" /></div>
    <I w={8} h={8} className="ml-[7px]"><path d="M4 0v8M0 4h8" stroke="#4c4c4c" strokeWidth="2" /></I>
    <div className="ml-[7px] flex h-[22px] w-[60px] items-center bg-white pl-[6px] text-[#222]"><T w={29}>100%</T><I w={5} h={3} className="ml-[15px]"><path d="M0 0h5L2.500 3z" fill="#444" /></I></div>
    <VLine className="ml-[5px]" />
    <Refresh className="ml-[6px]" />
  </div>
);

const TableView = () => (
  <div className="mt-[6px] w-[905px]">
    <div className="flex h-[25px] items-end border-b-2 border-[#0079cf]">
      <div className="flex h-[23px] w-[150px] items-center rounded-t-[3px] bg-[#0079cf] pl-[6px] pt-[3px] text-[12px] text-white">
        <I w={15} h={13}><path d="M0 0h15v13H0z" fill="#666" /><path d="M.7 .7h13.600v2H.7z" fill="#8fc5ea" /><path d="M1 3.700h3v2H1zM4.900 3.700h2.400v2H4.900zM8.200 3.700h2.400v2H8.200zM11.500 3.700H14v2h-2.500zM1 6.700h3v2H1zM4.900 6.700h2.400v2H4.900zM8.200 6.700h2.400v2H8.200zM11.500 6.700H14v2h-2.500zM1 9.700h3v2H1zM4.900 9.700h2.400v2H4.900zM8.200 9.700h2.400v2H8.200zM11.500 9.700H14v2h-2.500z" fill="#fff" /></I>
        <T w={97} className="ml-[6px]">MODIS_Landcover</T><Cross w={10} c="#d9ecfa" className="ml-[9px]" />
      </div>
      <Chevron w={9} c="#6a6a6a" className="mb-[8px] ml-auto mr-[5px]" />
    </div>
    <div className="h-[246px] border border-[#d0d0d4] bg-[#f7f9f8] px-px pt-px">
      <TableTools /><Grid /><TableFooter />
    </div>
  </div>
);

export default function App() {
  return (
    <div className="flex h-[841px] w-[1143px] flex-col overflow-hidden border border-[#bcbdc1] bg-[#eaeaea] font-['Open_Sans','Noto_Sans',sans-serif]">
      <div className="h-[153px] shrink-0 bg-[#f7f9f8]">
        <TitleBar /><Tabs /><Ribbon />
      </div>
      <div className="flex">
        <Contents />
        <div className="ml-[6px] mt-[6px]"><MapView /><TableView /></div>
      </div>
    </div>
  );
}
